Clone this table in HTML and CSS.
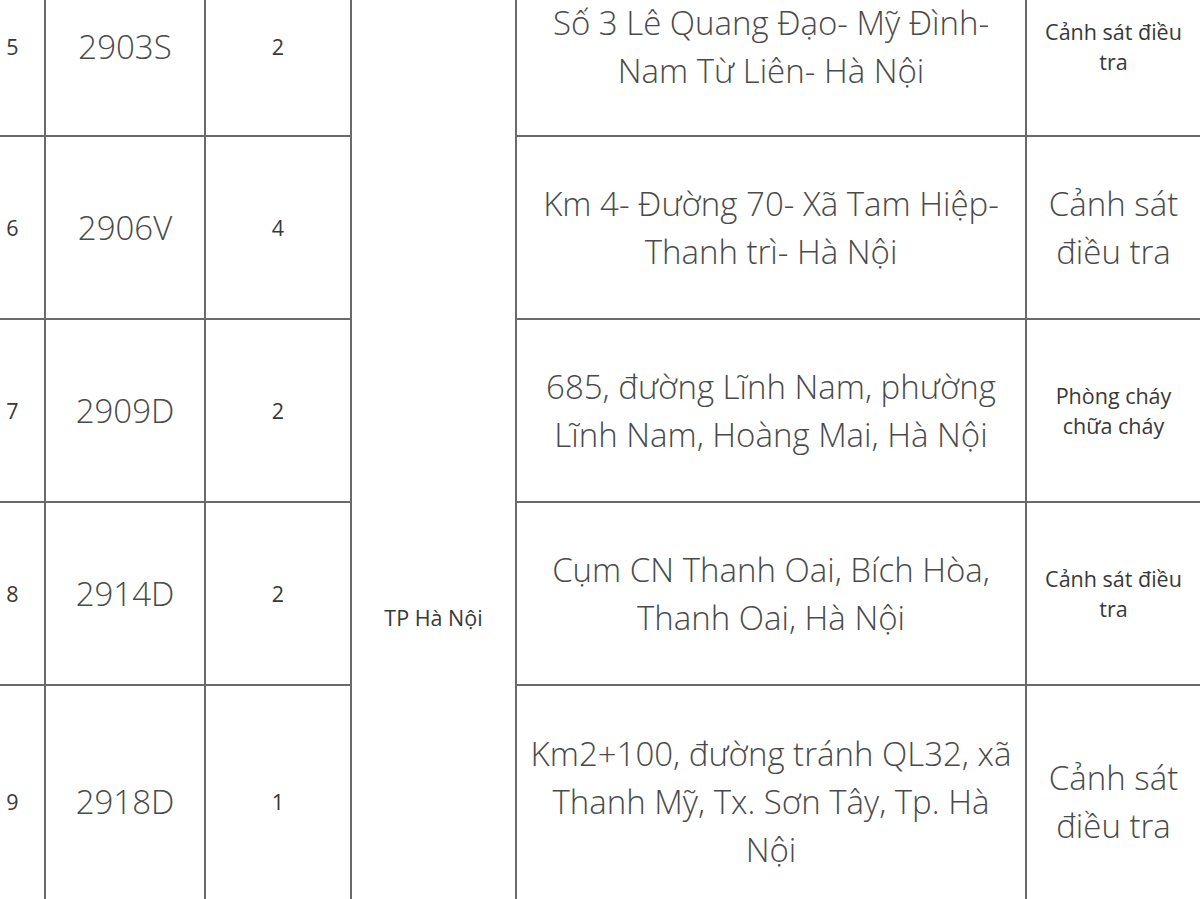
FILE: index.html
```html
<!DOCTYPE html>
<html lang="vi">
<head>
<meta charset="utf-8">
<title>Danh sách</title>
<link rel="stylesheet" href="styles.css">
</head>
<body>
<table class="list">
  <colgroup>
    <col class="c-no">
    <col class="c-code">
    <col class="c-qty">
    <col class="c-city">
    <col class="c-addr">
    <col class="c-unit">
  </colgroup>
  <tbody>
    <tr class="r5">
      <td class="sm">5</td>
      <td class="lg">2903S</td>
      <td class="sm">2</td>
      <td class="sm city" rowspan="5"><span class="city-label">TP Hà Nội</span></td>
      <td class="lg">Số 3 Lê Quang Đạo- Mỹ Đình- Nam Từ Liên- Hà Nội</td>
      <td class="sm">Cảnh sát điều tra</td>
    </tr>
    <tr class="r6">
      <td class="sm">6</td>
      <td class="lg">2906V</td>
      <td class="sm">4</td>
      <td class="lg">Km 4- Đường 70- Xã Tam Hiệp- Thanh trì- Hà Nội</td>
      <td class="lg">Cảnh sát điều tra</td>
    </tr>
    <tr class="r7">
      <td class="sm">7</td>
      <td class="lg">2909D</td>
      <td class="sm">2</td>
      <td class="lg">685, đường Lĩnh Nam, phường Lĩnh Nam, Hoàng Mai, Hà Nội</td>
      <td class="sm">Phòng cháy chữa cháy</td>
    </tr>
    <tr class="r8">
      <td class="sm">8</td>
      <td class="lg">2914D</td>
      <td class="sm">2</td>
      <td class="lg">Cụm CN Thanh Oai, Bích Hòa, Thanh Oai, Hà Nội</td>
      <td class="sm">Cảnh sát điều tra</td>
    </tr>
    <tr class="r9">
      <td class="sm">9</td>
      <td class="lg">2918D</td>
      <td class="sm">1</td>
      <td class="lg">Km2+100, đường tránh QL32, xã Thanh Mỹ, Tx. Sơn Tây, Tp. Hà Nội</td>
      <td class="lg">Cảnh sát điều tra</td>
    </tr>
  </tbody>
</table>
</body>
</html>
```

FILE: styles.css
```css
html, body {
  margin: 0;
  padding: 0;
  background: #ffffff;
  overflow: hidden;
}

body {
  width: 1200px;
  height: 899px;
}

.list {
  border-collapse: collapse;
  table-layout: fixed;
  width: 1221px;
  margin: -44px 0 0 -21px;
  color: #454545;
}

.c-no { width: 65px; }
.c-code { width: 160px; }
.c-qty { width: 146px; }
.c-city { width: 165px; }
.c-addr { width: 510px; }
.c-unit { width: 175px; }

.list td {
  border: 2px solid #6a6a6a;
  text-align: center;
  vertical-align: middle;
  padding: 0 12px;
}

.r5 td { height: 177px; }
.r6 td { height: 181px; }
.r7 td { height: 181px; }
.r8 td { height: 181px; }
.r9 td { height: 232px; }

.lg {
  font-family: "Open Sans", "Noto Sans", sans-serif;
  font-weight: 300;
  font-size: 33px;
  line-height: 48px;
  color: #4a4a4a;
}

.sm {
  font-family: "Open Sans", "Noto Sans", sans-serif;
  font-weight: 400;
  font-size: 21.5px;
  line-height: 30px;
  color: #383838;
}

.list td.city {
  vertical-align: top;
  padding-top: 645px;
}

.city-label {
  display: block;
}
```
